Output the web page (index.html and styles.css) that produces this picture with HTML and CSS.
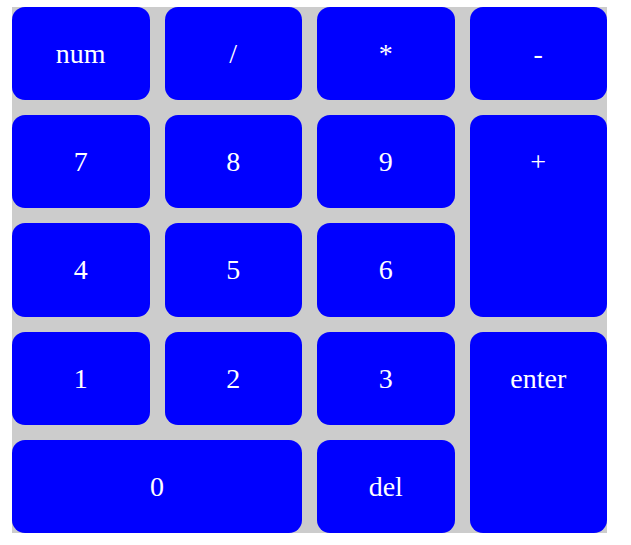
FILE: index.html
```html
<!DOCTYPE html>
<html lang="en">
<head>
	<meta charset="UTF-8">
	<title>Numpad</title>
	<link rel="stylesheet" href="styles.css">
</head>
<body>
	<div class="numpad">
		<div class="key">num</div>
		<div class="key">/</div>
		<div class="key">*</div>
		<div class="key">-</div>
		<div class="key">7</div>
		<div class="key">8</div>
		<div class="key">9</div>
		<div class="key key-tall">+</div>
		<div class="key">4</div>
		<div class="key">5</div>
		<div class="key">6</div>
		<div class="key">1</div>
		<div class="key">2</div>
		<div class="key">3</div>
		<div class="key key-tall">enter</div>
		<div class="key key-wide">0</div>
		<div class="key">del</div>
	</div>
</body>
</html>
```

FILE: styles.css
```css
body {
	margin: 0;
	background: #ffffff;
}

.numpad {
	margin: 7px 0 0 12px;
	width: 595px;
	height: 526px;
	background: #cccccc;
	display: grid;
	grid-template-columns: repeat(4, 1fr);
	grid-template-rows: repeat(5, 1fr);
	gap: 15px;
}

.key {
	background: #0000ff;
	color: #ffffff;
	border-radius: 13px;
	text-align: center;
	line-height: 93px;
	font-family: "Liberation Serif", "Times New Roman", serif;
	font-size: 28px;
}

.key-tall {
	grid-row: span 2;
}

.key-wide {
	grid-column: span 2;
}
```
